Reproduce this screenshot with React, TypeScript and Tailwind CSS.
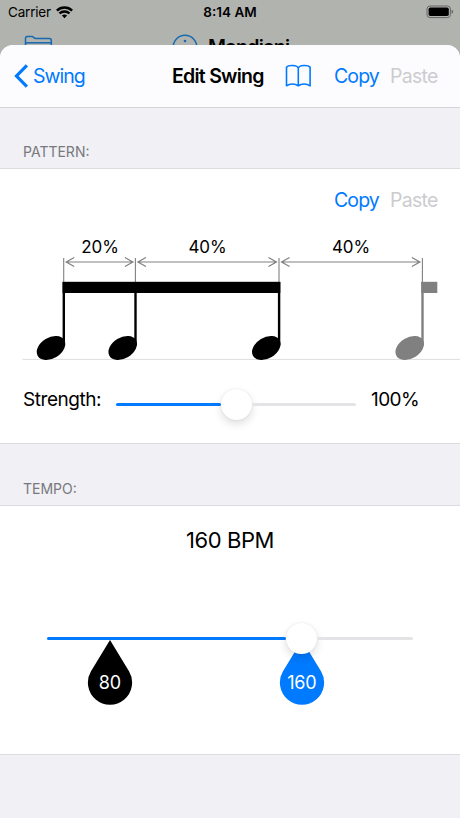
import React from "react";

const FONT = "font-['Inter','Liberation_Sans',sans-serif]";

function StatusBar() {
  return (
    <div className="flex h-6 items-center justify-between pl-[8px] pr-[6px]">
      <div className="flex w-[190px] items-center gap-[5px]">
        <span className="text-[13.5px] leading-5 tracking-[-0.2px]">Carrier</span>
        <svg width="17" height="13" viewBox="0 0 17 13" fill="none" stroke="#000" strokeWidth="2.5">
          <path d="M0.9 4.6A10.8 10.8 0 0 1 16.1 4.6" />
          <path d="M3.5 7.5A7 7 0 0 1 13.5 7.5" />
          <path d="M8.5 12.2L5.9 9.6A3.8 3.8 0 0 1 11.1 9.6Z" fill="#000" stroke="none" />
        </svg>
      </div>
      <span className="relative -left-px text-[13.5px] font-semibold leading-5">8:14 AM</span>
      <div className="flex w-[190px] justify-end">
        <svg width="28" height="14" viewBox="0 0 28 14">
          <rect x="1" y="1" width="23.4" height="11.6" rx="3" fill="none" stroke="#666" strokeWidth="1" />
          <rect x="2.6" y="2.6" width="20.2" height="8.4" rx="1.7" fill="#000" />
          <path d="M25.6 4.8Q27.2 5.4 27.2 6.8T25.6 8.8Z" fill="#666" />
        </svg>
      </div>
    </div>
  );
}

function Backdrop() {
  return (
    <div className="flex h-[21px] items-start pl-[24px]">
      <svg className="mt-[11px] shrink-0" width="29" height="24" viewBox="0 0 29 24" fill="none" stroke="#1769b0" strokeWidth="1.5">
        <path d="M1.5 20V3.2Q1.5 1.6 3.2 1.6H8Q9 1.6 9.6 2.3L10.2 2.9Q10.8 3.5 11.8 3.5H25.3Q27.3 3.5 27.3 5.5V20" />
        <path d="M1.5 7.8H27.3" />
      </svg>
      <svg className="ml-[119px] mt-[10px] shrink-0" width="26" height="26" viewBox="0 0 26 26" fill="none" stroke="#1769b0" strokeWidth="1.5">
        <circle cx="13" cy="13" r="11.8" />
        <circle cx="13" cy="7" r="1.3" fill="#1769b0" stroke="none" />
      </svg>
      <span className="ml-[10px] mt-[11px] text-[19.5px] font-semibold leading-[24px] tracking-[-0.65px]">Mandiani</span>
    </div>
  );
}

function CopyPaste() {
  return (
    <div className="flex gap-[12px] text-[19.5px] leading-6">
      <button className="w-[44px] whitespace-nowrap text-left tracking-[-0.9px] text-[#007aff]">Copy</button>
      <button className="w-[47px] whitespace-nowrap text-left tracking-[-0.75px] text-[#cccccf]">Paste</button>
    </div>
  );
}

function Header() {
  return (
    <header className="flex h-[63px] items-center border-b border-[#d5d5d9] bg-[#fcfcfe] pl-[14px] pr-[23px]">
      <svg width="15" height="24" viewBox="0 0 15 24" fill="none" stroke="#007aff" strokeWidth="3.2">
        <path d="M12.9 1.3L2.5 12L12.9 22.7" />
      </svg>
      <button className="ml-[4px] w-[138px] text-left text-[19.5px] leading-6 tracking-[-1px] text-[#007aff]">Swing</button>
      <h1 className="ml-px w-[93px] whitespace-nowrap text-[19.5px] font-semibold leading-6 tracking-[-0.75px]">Edit Swing</h1>
      <svg className="ml-[20px]" width="27" height="24" viewBox="0 0 27 24" fill="none" stroke="#007aff" strokeWidth="1.6" strokeLinejoin="round">
        <path d="M13.3 4.2C12.4 0.8 3.4 0.8 1.5 3.2V21.8C4.6 19.6 10.2 19.4 13.3 21.8C16.4 19.4 22 19.6 25.1 21.8V3.2C23.2 0.8 14.2 0.8 13.3 4.2V21.8" />
      </svg>
      <div className="ml-auto"><CopyPaste /></div>
    </header>
  );
}

function SectionTitle({ children }: { children: React.ReactNode }) {
  return <h2 className="pl-[23px] pt-[34px] text-[14px] leading-5 text-[#78787d]">{children}</h2>;
}

function Note({ x, color = "#000" }: { x: number; color?: string }) {
  return (
    <g fill={color}>
      <path d={`M${x} 2V28`} stroke="#808080" strokeWidth="1.1" />
      <rect x={x - 1.1} y="26" width="2.4" height="63.5" />
      <ellipse cx={x - 12.7} cy="92" rx="15.4" ry="10.4" transform={`rotate(-31 ${x - 12.7} 92)`} />
    </g>
  );
}

function Span({ from, to }: { from: number; to: number }) {
  const a = from + 2.5;
  const b = to - 2.5;
  return (
    <path
      d={`M${a} 6H${b}M${a + 8} 1.5L${a} 6L${a + 8} 10.5M${b - 8} 1.5L${b} 6L${b - 8} 10.5`}
      fill="none"
      stroke="#808080"
      strokeWidth="1.2"
    />
  );
}

function Rhythm() {
  return (
    <svg className="block" width="460" height="105" viewBox="0 0 460 105">
      <path d="M22.5 103.4H460" stroke="#dedee0" strokeWidth="1" />
      <Note x={63.7} />
      <Note x={135.4} />
      <Note x={279} />
      <Note x={422.4} color="#808080" />
      <rect x="62.6" y="25.8" width="217.7" height="11.2" />
      <rect x="421.3" y="25.8" width="16" height="11.2" fill="#808080" />
      <Span from={63.7} to={135.4} />
      <Span from={135.4} to={279} />
      <Span from={279} to={422.4} />
    </svg>
  );
}

function Thumb() {
  return <div className="h-[31px] w-[31px] shrink-0 rounded-full bg-white shadow-[0_4px_9px_rgba(0,0,0,0.13),0_0_2px_rgba(0,0,0,0.1)]" />;
}

function Slider({ left, right }: { left: string; right: string }) {
  return (
    <div className="flex items-center">
      <div className={`h-[3.5px] rounded-full bg-[#007aff] ${left}`} />
      <Thumb />
      <div className={`h-[3.5px] rounded-full bg-[#e4e4e6] ${right}`} />
    </div>
  );
}

function Drop({ value, color }: { value: string; color: string }) {
  return (
    <svg className="block" width="46" height="67" viewBox="0 0 46 67">
      <path d="M23 1L42 32.3A22.1 22.1 0 1 1 4 32.3Z" fill={color} />
      <text x="22.8" y="50.4" textAnchor="middle" fill="#fff" fontSize="18" letterSpacing="-0.3">{value}</text>
    </svg>
  );
}

export default function App() {
  return (
    <div className={`h-[818px] w-[460px] overflow-hidden bg-[#b1b3af] text-black antialiased ${FONT}`}>
      <StatusBar />
      <Backdrop />
      <main className="relative h-[773px] overflow-hidden rounded-t-[13px] bg-[#f0f0f5]">
        <Header />
        <div className="h-[60px]"><SectionTitle>PATTERN:</SectionTitle></div>
        <section className="h-[276px] border-y border-[#dcdce0] bg-white">
          <div className="flex h-[61px] items-center justify-end pr-[23px]"><CopyPaste /></div>
          <div className="flex h-[26px] items-center pl-[64px] pt-[8px] text-center text-[17px] leading-6 tracking-[-0.1px]">
            <span className="w-[72px]">20%</span>
            <span className="w-[143px]">40%</span>
            <span className="w-[144px]">40%</span>
          </div>
          <Rhythm />
          <div className="flex h-[82px] items-center pl-[23px] pt-[5px] text-[19px]">
            <span className="w-[93px] whitespace-nowrap pb-[9px] tracking-[-0.45px]">Strength:</span>
            <Slider left="w-[105px]" right="w-[104px]" />
            <span className="ml-[15px] pb-[9px] tracking-[-0.6px]">100%</span>
          </div>
        </section>
        <div className="h-[61px] pt-px"><SectionTitle>TEMPO:</SectionTitle></div>
        <section className="h-[250px] border-y border-[#dcdce0] bg-white">
          <div className="pt-[19px] text-center text-[22px] leading-[30px] tracking-[-0.4px]">160 BPM</div>
          <div className="relative mt-[68px] pl-[47px]">
            <div className="absolute left-[87px] top-[16px]"><Drop value="80" color="#000" /></div>
            <div className="absolute left-[279px] top-[16px]"><Drop value="160" color="#007aff" /></div>
            <div className="relative"><Slider left="w-[239px]" right="w-[96px]" /></div>
          </div>
        </section>
      </main>
    </div>
  );
}
